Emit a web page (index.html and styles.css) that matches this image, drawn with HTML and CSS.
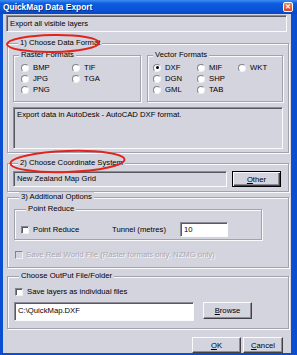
FILE: index.html
```html
<!DOCTYPE html>
<html lang="en">
<head>
    <meta charset="UTF-8">
    <meta name="viewport" content="width=device-width, initial-scale=1.0">
    <title>QuickMap Data Export</title>
    <link rel="stylesheet" href="styles.css">
</head>
<body>
    <div class="window">
        <div class="titlebar">
            <span class="title">QuickMap Data Export</span>
            <span class="close">&#x2715;</span>
        </div>
        <div class="client">
            <div class="field readonly info">Export all visible layers</div>

            <div class="group format">
                <div class="legend">1) Choose Data Format</div>
                <div class="subgroups">
                    <div class="group sub raster">
                        <div class="legend">Raster Formats</div>
                        <div class="options">
                            <label class="radio"><span class="dot"></span>BMP</label>
                            <label class="radio"><span class="dot"></span>JPG</label>
                            <label class="radio"><span class="dot"></span>PNG</label>
                            <label class="radio"><span class="dot"></span>TIF</label>
                            <label class="radio"><span class="dot"></span>TGA</label>
                        </div>
                    </div>
                    <div class="group sub vector">
                        <div class="legend">Vector Formats</div>
                        <div class="options">
                            <label class="radio"><span class="dot checked"></span>DXF</label>
                            <label class="radio"><span class="dot"></span>DGN</label>
                            <label class="radio"><span class="dot"></span>GML</label>
                            <label class="radio"><span class="dot"></span>MIF</label>
                            <label class="radio"><span class="dot"></span>SHP</label>
                            <label class="radio"><span class="dot"></span>TAB</label>
                            <label class="radio"><span class="dot"></span>WKT</label>
                        </div>
                    </div>
                </div>
                <div class="field readonly description">Export data in AutoDesk - AutoCAD DXF format.</div>
            </div>

            <div class="group coords">
                <div class="legend">2) Choose Coordinate System</div>
                <div class="row">
                    <div class="field readonly system">New Zealand Map Grid</div>
                    <button class="btn default other"><u>O</u>ther</button>
                </div>
            </div>

            <div class="group options-group">
                <div class="legend">3) Additional Options</div>
                <div class="group sub reduce">
                    <div class="legend">Point Reduce</div>
                    <div class="row">
                        <label class="check reduce-check"><span class="box"></span>Point Reduce</label>
                        <span class="tunnel">Tunnel (metres)</span>
                        <div class="field white tunnel-value">10</div>
                    </div>
                </div>
                <label class="check disabled world"><span class="box"></span>Save Real World File (Raster formats only, NZMG only)</label>
            </div>

            <div class="group output">
                <div class="legend">Choose OutPut File/Folder</div>
                <label class="check layers"><span class="box"></span>Save layers as individual files</label>
                <div class="row">
                    <div class="field white path">C:\QuickMap.DXF</div>
                    <button class="btn browse"><u>B</u>rowse</button>
                </div>
            </div>

            <div class="actions">
                <button class="btn ok"><u>O</u>K</button>
                <button class="btn cancel"><u>C</u>ancel</button>
            </div>
        </div>

        <!-- red marks drawn over the dialog -->
        <svg class="marks" width="297" height="355" viewBox="0 0 297 355">
            <ellipse cx="53" cy="43.5" rx="46" ry="8.5" transform="rotate(-1 53 43.5)"/>
            <ellipse cx="67.5" cy="161.5" rx="57" ry="10.5" transform="rotate(-2 67.5 161.5)"/>
        </svg>
    </div>
</body>
</html>
```

FILE: styles.css
```css
body {
    margin: 0;
    font-family: "Liberation Sans", Arial, sans-serif;
    font-size: 7.7px;
    color: #000;
}

.window {
    position: relative;
    width: 297px;
    height: 355px;
    box-sizing: border-box;
    background: #0a4fd2;
    padding: 0 6px 2px 3px;
    overflow: hidden;
}

.titlebar {
    display: flex;
    align-items: center;
    justify-content: space-between;
    height: 14px;
    margin: 0 -6px 0 -3px;
    padding: 0 4px 0 3px;
    background: linear-gradient(#3f8cf3, #0d5de0 25%, #0a54d6 70%, #0846c4);
}

.title {
    color: #fff;
    font-weight: bold;
    font-size: 8.4px;
    text-shadow: 1px 1px #0a2a80;
}

.close {
    width: 10px;
    height: 10px;
    box-sizing: border-box;
    border: 1px solid #fff;
    border-radius: 2px;
    background: linear-gradient(#e8845e, #d6401c);
    color: #fff;
    font-size: 7px;
    line-height: 8px;
    text-align: center;
    font-weight: bold;
}

.client {
    height: 339px;
    box-sizing: border-box;
    background: #d4d4de;
    padding: 0 2px 0 4px;
    display: flex;
    flex-direction: column;
}

/* text boxes */
.field {
    box-sizing: border-box;
    border: 1px solid;
    border-color: #8d8c96 #fbfbfd #fbfbfd #8d8c96;
    box-shadow: inset 1px 1px #5a5960;
    padding: 2px 3px;
    line-height: 11px;
    white-space: nowrap;
}

.readonly {
    background: #d4d4de;
}

.white {
    background: #fff;
}

.info {
    margin: 1px 2px 0 -1px;
    height: 18px;
}

/* etched group boxes */
.group {
    border: 1px solid #a3a2ac;
    box-shadow: inset 1px 1px #fafafc, 1px 1px #fafafc;
}

.legend {
    width: max-content;
    height: 10px;
    line-height: 10px;
    margin: -6px 0 0 5px;
    padding: 0 2px;
    background: #d4d4de;
}

.format {
    margin-top: 11px;
    padding: 0 5px 3px 5px;
}

.subgroups {
    display: flex;
    gap: 6px;
    margin-top: 7px;
}

.sub {
    box-sizing: border-box;
}

.raster,
.vector {
    height: 47px;
}

.raster {
    width: 128px;
}

.vector {
    flex: 1;
}

.options {
    display: grid;
    grid-template-rows: repeat(3, 11px);
    grid-auto-flow: column;
    margin-top: 2px;
}

.raster .options {
    grid-template-columns: 51px auto;
    padding-left: 7px;
}

.vector .options {
    grid-template-columns: 44px 41px auto;
    padding-left: 5px;
}

.radio,
.check {
    display: flex;
    align-items: center;
    height: 11px;
    line-height: 11px;
    white-space: nowrap;
}

.dot {
    position: relative;
    width: 8px;
    height: 8px;
    box-sizing: border-box;
    margin-right: 4px;
    border-radius: 50%;
    background: #fff;
    border: 1px solid;
    border-color: #84838c #f0f0f4 #f0f0f4 #84838c;
}

.dot.checked::after {
    content: "";
    position: absolute;
    left: 1.5px;
    top: 1.5px;
    width: 3px;
    height: 3px;
    border-radius: 50%;
    background: #000;
}

.description {
    margin-top: 5px;
    height: 42px;
    padding-top: 1px;
}

.coords {
    margin-top: 10px;
    padding: 0 5px 4px 5px;
}

.row {
    display: flex;
    align-items: flex-start;
}

.coords .row {
    margin-top: 3px;
}

.system {
    width: 214px;
    height: 16px;
    padding-top: 1px;
}

/* buttons */
.btn {
    box-sizing: border-box;
    height: 16px;
    padding: 0;
    font-family: inherit;
    font-size: 7.7px;
    color: #000;
    background: #d4d4de;
    border: 1px solid;
    border-color: #fbfbfd #404046 #404046 #fbfbfd;
    box-shadow: inset -1px -1px #8d8c96;
}

.btn.default {
    border-color: #000;
    box-shadow: inset 1px 1px #fbfbfd, inset -1px -1px #404046, inset -2px -2px #8d8c96;
}

.other {
    width: 49px;
    margin-left: 5px;
}

.options-group {
    margin-top: 5px;
    padding: 0 0 7px 6px;
    margin-right: 0;
}

.reduce {
    margin-top: 7px;
    width: 248px;
    padding: 0 0 2px 6px;
}

.reduce .row {
    margin-top: 8px;
    align-items: center;
    height: 15px;
}

.box {
    width: 8px;
    height: 8px;
    box-sizing: border-box;
    margin-right: 4px;
    background: #fff;
    border: 1px solid;
    border-color: #84838c #f0f0f4 #f0f0f4 #84838c;
    box-shadow: inset 1px 1px #5a5960;
}

.reduce-check {
    width: 91px;
}

.tunnel {
    width: 68px;
}

.tunnel-value {
    width: 48px;
    height: 15px;
    padding-top: 1px;
}

.world {
    margin: 9px 0 0 1px;
    color: #a9a8b2;
    text-shadow: 1px 1px #fafafc;
}

.world .box {
    background: #d4d4de;
    margin-right: 3px;
    box-shadow: none;
}

.output {
    margin-top: 8px;
    padding: 0 0 7px 6px;
}

.layers {
    margin: 5px 0 0 1px;
}

.output .row {
    margin-top: 5px;
}

.path {
    width: 180px;
    height: 19px;
    padding-top: 2px;
}

.browse {
    width: 49px;
    height: 17px;
    margin-left: 9px;
}

.actions {
    display: flex;
    justify-content: flex-end;
    gap: 2px;
    margin-top: 8px;
    padding-right: 6px;
}

.ok {
    width: 49px;
}

.cancel {
    width: 40px;
}

.marks {
    position: absolute;
    left: 0;
    top: 0;
    pointer-events: none;
}

.marks ellipse {
    fill: none;
    stroke: #e3241c;
    stroke-width: 2;
}
```
